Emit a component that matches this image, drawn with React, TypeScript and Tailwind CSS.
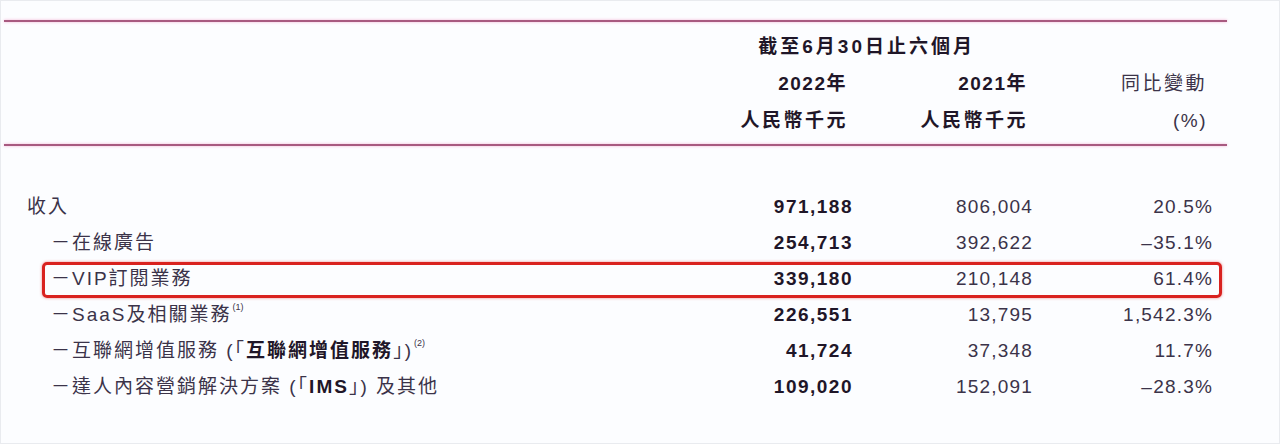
import React from "react";

type Row = {
  label: React.ReactNode;
  a: string;
  b: string;
  c: string;
  boxed?: boolean;
};

const Sup = ({ children }: { children: React.ReactNode }) => (
  <sup className="text-[9px] tracking-normal align-top relative top-[6px] ml-[1px]">{children}</sup>
);

const rows: Row[] = [
  { label: "收入", a: "971,188", b: "806,004", c: "20.5%" },
  { label: <span className="pl-[24px]">－在線廣告</span>, a: "254,713", b: "392,622", c: "–35.1%" },
  { label: <span className="pl-[24px]">－VIP訂閱業務</span>, a: "339,180", b: "210,148", c: "61.4%", boxed: true },
  {
    label: (
      <span className="pl-[24px]">
        －SaaS及相關業務<Sup>(1)</Sup>
      </span>
    ),
    a: "226,551",
    b: "13,795",
    c: "1,542.3%",
  },
  {
    label: (
      <span className="pl-[24px]">
        －互聯網增值服務 (「<b className="font-bold text-[#1f1628]">互聯網增值服務</b>」)<Sup>(2)</Sup>
      </span>
    ),
    a: "41,724",
    b: "37,348",
    c: "11.7%",
  },
  {
    label: (
      <span className="pl-[24px]">
        －達人內容營銷解決方案 (「<b className="font-bold text-[#1f1628]">IMS</b>」) 及其他
      </span>
    ),
    a: "109,020",
    b: "152,091",
    c: "–28.3%",
  },
];

const font = { fontFamily: '"Liberation Sans", "Noto Sans CJK TC", sans-serif' };

export default function App() {
  return (
    <div
      className="w-[1280px] h-[444px] bg-[#fcfdff] border border-[#e9ebef] text-[#3b3349] overflow-hidden"
      style={font}
    >
      <div className="mt-[19px] ml-[3px] w-[1223px] h-[2px] bg-[#a85a80] shadow-[0_0_3px_#f3acd0]" />

      <div className="pt-[7px] pb-[4px] pl-[26px] pr-[66px] text-[19px]">
        <div className="grid grid-cols-[1fr_180px_180px_180px] h-[37px] items-center">
          <div className="col-start-2 col-span-2 flex justify-end pr-[58px]">
            <span className="font-bold text-[#1f1628] tracking-[3px]">截至6月30日止六個月</span>
          </div>
        </div>
        <div className="grid grid-cols-[1fr_180px_180px_180px] h-[37px] items-center text-right">
          <div />
          <div className="font-bold text-[#1f1628] tracking-[1.5px] pr-[6px]">2022年</div>
          <div className="font-bold text-[#1f1628] tracking-[1.5px] pr-[6px]">2021年</div>
          <div className="tracking-[2.5px] pr-[6px]">同比變動</div>
        </div>
        <div className="grid grid-cols-[1fr_180px_180px_180px] h-[37px] items-center text-right">
          <div />
          <div className="font-bold text-[#1f1628] tracking-[2.5px] pr-[5px]">人民幣千元</div>
          <div className="font-bold text-[#1f1628] tracking-[2.5px] pr-[5px]">人民幣千元</div>
          <div className="tracking-[1.5px] pr-[6px]">(%)</div>
        </div>
      </div>

      <div className="ml-[3px] w-[1223px] h-[2px] bg-[#a85a80] shadow-[0_0_3px_#f3acd0]" />

      <div className="pt-[43px] pl-[26px] pr-[66px] text-[19px]">
        {rows.map((r, i) => (
          <div key={i} className="relative grid grid-cols-[1fr_180px_180px_180px] h-[36px] items-center">
            {r.boxed && (
              <div className="absolute left-[15px] right-[-9px] top-[1px] bottom-[-1px] border-[3px] border-[#d9221f] rounded-[5px] shadow-[0_0_3px_rgba(220,40,40,0.55)]" />
            )}
            <div className="tracking-[2px] whitespace-nowrap">{r.label}</div>
            <div className="text-right font-bold text-[#1f1628] tracking-[1.5px]">{r.a}</div>
            <div className="text-right tracking-[1.2px]">{r.b}</div>
            <div className="text-right tracking-[1.2px]">{r.c}</div>
          </div>
        ))}
      </div>
    </div>
  );
}
